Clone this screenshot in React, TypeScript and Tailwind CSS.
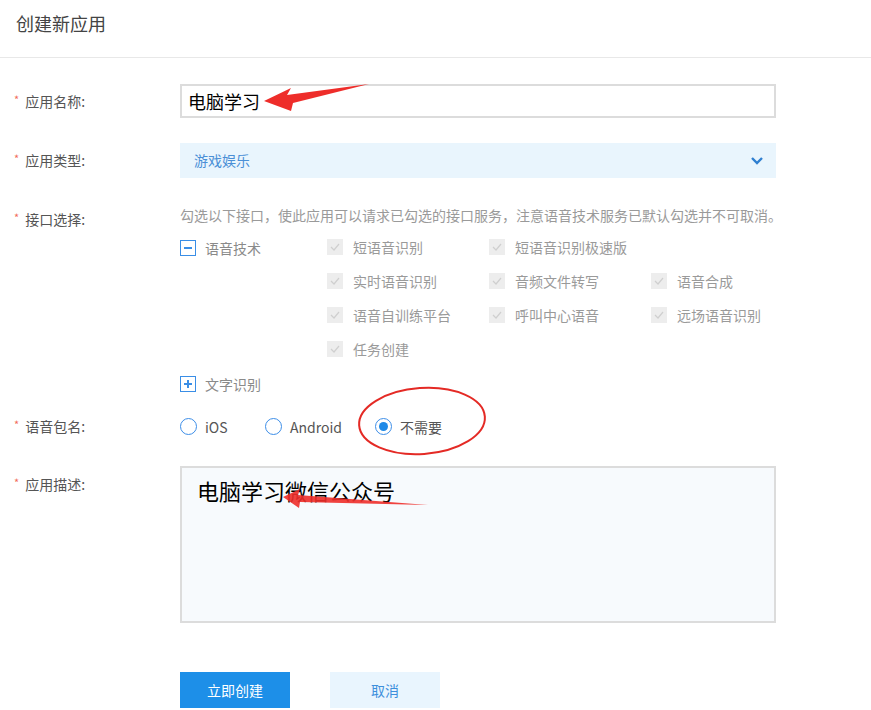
import React from 'react'

const font = {fontFamily: '"Noto Sans CJK SC", "Noto Sans", sans-serif'}

const Label = ({text}: {text: string}) => (
  <div className="w-[180px] shrink-0 flex items-center pl-[14px] text-[14px] text-[#555]">
    <span className="text-[#f26b5b] text-[11px] mr-[6px] -mt-[4px]">*</span>
    {text}
  </div>
)

const GrayCheck = ({text}: {text: string}) => (
  <div className="flex items-center gap-[10px] w-[162px]">
    <span className="w-[16px] h-[16px] bg-[#ededed] flex items-center justify-center">
      <svg width="10" height="8" viewBox="0 0 10 8">
        <path d="M1 4l3 3 5-6" fill="none" stroke="#cfcfcf" strokeWidth="1.2" />
      </svg>
    </span>
    <span className="text-[14px] text-[#9a9a9a]">{text}</span>
  </div>
)

const Radio = ({text, on}: {text: string; on?: boolean}) => (
  <div className="flex items-center gap-[8px]">
    <span className="w-[17px] h-[17px] rounded-full border-[1.5px] border-[#3d8ee8] flex items-center justify-center bg-white">
      {on && <span className="w-[9px] h-[9px] rounded-full bg-[#1f8ae8]" />}
    </span>
    <span className="text-[14px] text-[#555] mt-[3px]">{text}</span>
  </div>
)

export default function App() {
  return (
    <div className="relative w-[871px] h-[710px] bg-white overflow-hidden" style={font}>
      <div className="h-[58px] border-b border-[#e8e8e8] pt-[10px] pl-[16px] text-[18px] text-[#444]">
        创建新应用
      </div>

      <div className="flex flex-col">
        <div className="flex mt-[26px] h-[34px]">
          <Label text="应用名称:" />
          <div className="w-[596px] border-2 border-[#dcdcdc] flex items-center pl-[6px] text-[18px] text-black">
            电脑学习
          </div>
        </div>

        <div className="flex mt-[25px] h-[35px]">
          <Label text="应用类型:" />
          <div className="w-[596px] bg-[#e9f5fd] flex items-center justify-between pl-[14px] pr-[12px] text-[14px] text-[#4a8fd6]">
            游戏娱乐
            <svg width="14" height="10" viewBox="0 0 14 10">
              <path d="M2 2l5 5 5-5" fill="none" stroke="#2f7fd0" strokeWidth="2.4" />
            </svg>
          </div>
        </div>

        <div className="flex mt-[29px]">
          <div className="flex flex-col">
            <div className="h-[16px] flex items-start mt-[2px]">
              <Label text="接口选择:" />
            </div>
          </div>
          <div className="flex flex-col">
            <div className="h-[16px] leading-[16px] text-[14px] text-[#9a9a9a] whitespace-nowrap">
              勾选以下接口，使此应用可以请求已勾选的接口服务，注意语音技术服务已默认勾选并不可取消。
            </div>
            <div className="flex mt-[7px]">
              <div className="w-[147px] h-[34px] flex items-center gap-[9px] mt-[1px]">
                <span className="w-[16px] h-[16px] border-[1.5px] border-[#3a8ee6] flex items-center justify-center">
                  <span className="w-[8px] h-[2px] bg-[#3a8ee6]" />
                </span>
                <span className="text-[14px] text-[#8a8a8a]">语音技术</span>
              </div>
              <div className="grid grid-cols-[162px_162px_162px] auto-rows-[34px] items-center">
                <GrayCheck text="短语音识别" />
                <GrayCheck text="短语音识别极速版" />
                <div />
                <GrayCheck text="实时语音识别" />
                <GrayCheck text="音频文件转写" />
                <GrayCheck text="语音合成" />
                <GrayCheck text="语音自训练平台" />
                <GrayCheck text="呼叫中心语音" />
                <GrayCheck text="远场语音识别" />
                <GrayCheck text="任务创建" />
              </div>
            </div>
            <div className="h-[34px] flex items-center gap-[9px] mt-[1px]">
              <span className="w-[16px] h-[16px] border-[1.5px] border-[#3a8ee6] flex items-center justify-center relative">
                <span className="w-[8px] h-[2px] bg-[#3a8ee6]" />
                <span className="absolute w-[2px] h-[8px] bg-[#3a8ee6]" />
              </span>
              <span className="text-[14px] text-[#8a8a8a]">文字识别</span>
            </div>
          </div>
        </div>

        <div className="flex mt-[8px] h-[34px]">
          <Label text="语音包名:" />
          <div className="flex items-center">
            <div className="w-[85px]">
              <Radio text="iOS" />
            </div>
            <div className="w-[110px]">
              <Radio text="Android" />
            </div>
            <Radio text="不需要" on />
          </div>
        </div>

        <div className="flex mt-[23px]">
          <div className="flex items-start h-[34px] pt-[8px]">
            <Label text="应用描述:" />
          </div>
          <div className="w-[596px] h-[157px] border-2 border-[#dcdcdc] bg-[#f7fafd] pl-[15px] pt-[6px] text-[22px] text-black">
            电脑学习微信公众号
          </div>
        </div>

        <div className="flex mt-[49px] pl-[180px] gap-[40px]">
          <button className="w-[110px] h-[36px] bg-[#1d8fe8] text-white text-[14px]">立即创建</button>
          <button className="w-[110px] h-[36px] bg-[#e9f5fe] text-[#3d8fdc] text-[14px]">取消</button>
        </div>
      </div>

      <svg className="absolute inset-0 pointer-events-none" width="871" height="710">
        <polygon points="264,101 291,88 287,95 369,84 293,103 291,111" fill="#ee2d2a" />
        <polygon points="283,497 300,489 298,495 428,505 300,502 299,508" fill="#ee2d2a" opacity="0.9" />
        <ellipse cx="422" cy="421" rx="63" ry="33" fill="none" stroke="#e42a25" strokeWidth="2" transform="rotate(-4 422 421)" />
      </svg>
    </div>
  )
}
